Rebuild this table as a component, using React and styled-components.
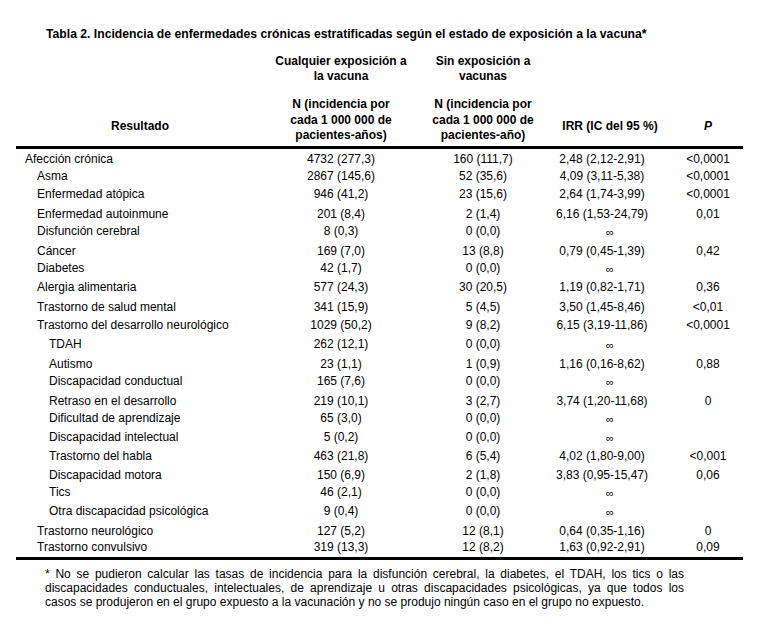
import React from 'react'
import styled, { createGlobalStyle } from 'styled-components'

const GlobalStyle = createGlobalStyle`
    html, body {
        margin:0;
        padding:0;
        background:#fff;
    }
    body {
        font-family:"Liberation Sans", Arial, sans-serif;
        color:#000;
    }
`

const COLS = '256px 138px 146px 92px 95px'

const rows = [
    ['Afección crónica', 0, '4732 (277,3)', '160 (111,7)', '2,48 (2,12-2,91)', '<0,0001', 17],
    ['Asma', 1, '2867 (145,6)', '52 (35,6)', '4,09 (3,11-5,38)', '<0,0001', 18],
    ['Enfermedad atópica', 1, '946 (41,2)', '23 (15,6)', '2,64 (1,74-3,99)', '<0,0001', 20],
    ['Enfermedad autoinmune', 1, '201 (8,4)', '2 (1,4)', '6,16 (1,53-24,79)', '0,01', 17],
    ['Disfunción cerebral', 1, '8 (0,3)', '0 (0,0)', '∞', '', 20],
    ['Cáncer', 1, '169 (7,0)', '13 (8,8)', '0,79 (0,45-1,39)', '0,42', 17],
    ['Diabetes', 1, '42 (1,7)', '0 (0,0)', '∞', '', 19],
    ['Alergia alimentaria', 1, '577 (24,3)', '30 (20,5)', '1,19 (0,82-1,71)', '0,36', 20],
    ['Trastorno de salud mental', 1, '341 (15,9)', '5 (4,5)', '3,50 (1,45-8,46)', '<0,01', 18],
    ['Trastorno del desarrollo neurológico', 1, '1029 (50,2)', '9 (8,2)', '6,15 (3,19-11,86)', '<0,0001', 19],
    ['TDAH', 2, '262 (12,1)', '0 (0,0)', '∞', '', 20],
    ['Autismo', 2, '23 (1,1)', '1 (0,9)', '1,16 (0,16-8,62)', '0,88', 17],
    ['Discapacidad conductual', 2, '165 (7,6)', '0 (0,0)', '∞', '', 20],
    ['Retraso en el desarrollo', 2, '219 (10,1)', '3 (2,7)', '3,74 (1,20-11,68)', '0', 17],
    ['Dificultad de aprendizaje', 2, '65 (3,0)', '0 (0,0)', '∞', '', 19],
    ['Discapacidad intelectual', 2, '5 (0,2)', '0 (0,0)', '∞', '', 19],
    ['Trastorno del habla', 2, '463 (21,8)', '6 (5,4)', '4,02 (1,80-9,00)', '<0,001', 19],
    ['Discapacidad motora', 2, '150 (6,9)', '2 (1,8)', '3,83 (0,95-15,47)', '0,06', 17],
    ['Tics', 2, '46 (2,1)', '0 (0,0)', '∞', '', 19],
    ['Otra discapacidad psicológica', 2, '9 (0,4)', '0 (0,0)', '∞', '', 20],
    ['Trastorno neurológico', 1, '127 (5,2)', '12 (8,1)', '0,64 (0,35-1,16)', '0', 16],
    ['Trastorno convulsivo', 1, '319 (13,3)', '12 (8,2)', '1,63 (0,92-2,91)', '0,09', 18],
]

const App = () => {
    return (
        <>
            <GlobalStyle/>
            <Page>
                <Title>Tabla 2. Incidencia de enfermedades crónicas estratificadas según el estado de exposición a la vacuna*</Title>
                <Head>
                    <span/>
                    <GroupHead>Cualquier exposición a<br/>la vacuna</GroupHead>
                    <GroupHead>Sin exposición a<br/>vacunas</GroupHead>
                    <span/>
                    <span/>
                    <SideHead $pr={8}>Resultado</SideHead>
                    <SubHead>N (incidencia por<br/>cada 1 000 000 de<br/>pacientes-años)</SubHead>
                    <SubHead>N (incidencia por<br/>cada 1 000 000 de<br/>pacientes-año)</SubHead>
                    <SideHead $pl={16}>IRR (IC del 95 %)</SideHead>
                    <SideHead $pl={25}><i>P</i></SideHead>
                </Head>
                <Body>
                    {rows.map(([label, level, n1, n2, irr, p, h]) => (
                        <Row key={label} $h={h}>
                            <Label $level={level}>{label}</Label>
                            <Cell>{n1}</Cell>
                            <Cell>{n2}</Cell>
                            {irr === '∞' ? <Infinity>∞</Infinity> : <Cell>{irr}</Cell>}
                            <Cell $pl={25}>{p}</Cell>
                        </Row>
                    ))}
                </Body>
                <Note>* No se pudieron calcular las tasas de incidencia para la disfunción cerebral, la diabetes, el TDAH, los tics o las discapacidades conductuales, intelectuales, de aprendizaje u otras discapacidades psicológicas, ya que todos los casos se produjeron en el grupo expuesto a la vacunación y no se produjo ningún caso en el grupo no expuesto.</Note>
            </Page>
        </>
    )
}

const Page = styled.div`
    width:727px;
    height:638px;
    box-sizing:border-box;
    margin-left:16px;
    padding-top:26px;
    font-size:12px;
`

const Title = styled.h1`
    margin:0 0 11px 30px;
    font-size:12.2px;
    line-height:17px;
    font-weight:700;
    white-space:nowrap;
`

const Head = styled.div`
    display:grid;
    grid-template-columns:${COLS};
    row-gap:14px;
    padding-bottom:2px;
    border-bottom:3px solid #000;
    font-weight:700;
`

const GroupHead = styled.div`
    text-align:center;
    line-height:14.5px;
`

const SubHead = styled.div`
    text-align:center;
    line-height:15.5px;
`

const SideHead = styled.div`
    align-self:end;
    display:flex;
    justify-content:center;
    white-space:nowrap;
    line-height:15.5px;
    margin-bottom:9.5px;
    padding-left:${p => p.$pl || 0}px;
    padding-right:${p => p.$pr || 0}px;
`

const Body = styled.div`
    padding-top:2px;
    border-bottom:3px solid #000;
`

const Row = styled.div`
    display:grid;
    grid-template-columns:${COLS};
    height:${p => p.$h}px;
    line-height:17px;
`

const Label = styled.div`
    padding-left:${p => 9 + p.$level * 12}px;
    white-space:nowrap;
`

const Cell = styled.div`
    display:flex;
    justify-content:center;
    white-space:nowrap;
    padding-left:${p => p.$pl || 0}px;
`

const Infinity = styled.div`
    display:flex;
    justify-content:center;
    padding-left:16px;
    font-size:11px;
    padding-top:1px;
`

const Note = styled.p`
    margin:7px 0 0 29px;
    width:639px;
    text-align:justify;
    line-height:14.2px;
    font-size:12px;
`

export default App
